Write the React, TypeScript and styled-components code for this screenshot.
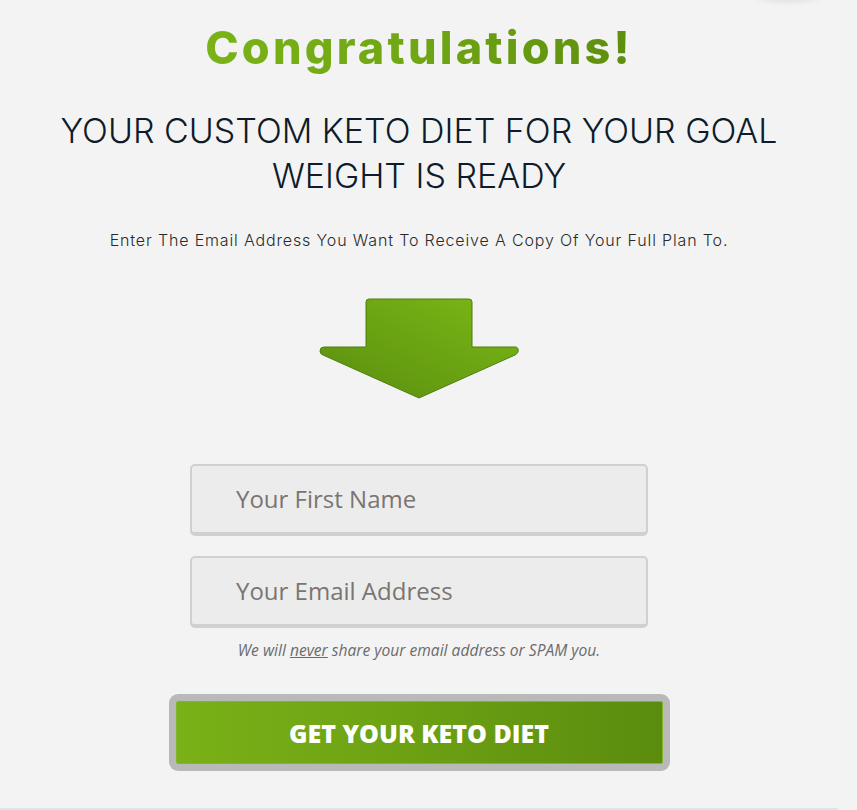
import React from "react";
import styled, { createGlobalStyle } from "styled-components";

const Global = createGlobalStyle`
  html, body { margin: 0; padding: 0; background: #f3f3f3; }
  body { font-family: "Open Sans", "Liberation Sans", sans-serif; overflow: hidden; }
`;

const Page = styled.div`
  position: relative;
  width: 838px;
  height: 808px;
  border-bottom: 2px solid #dfe4ea;
  display: flex;
  flex-direction: column;
  align-items: center;
  box-sizing: content-box;
`;

const TopShadow = styled.div`
  position: absolute;
  top: -16px;
  left: 754px;
  width: 68px;
  height: 16px;
  border-radius: 50%;
  box-shadow: 0 2px 6px rgba(0, 0, 0, 0.08);
  background: #f3f3f3;
`;

const Title = styled.h1`
  margin: 20px 0 0;
  font-family: "Inter", sans-serif;
  font-weight: 800;
  font-size: 45px;
  line-height: 56px;
  letter-spacing: 3.2px;
  background: linear-gradient(90deg, #7ab317 0%, #6fa614 50%, #5d8e0f 100%);
  -webkit-background-clip: text;
  background-clip: text;
  color: transparent;
`;

const Headline = styled.h2`
  margin: 32px 0 0;
  width: 760px;
  text-align: center;
  font-family: "Inter", sans-serif;
  font-weight: 300;
  font-size: 34px;
  line-height: 45px;
  letter-spacing: 0;
  color: #0d1b2a;
`;

const Lead = styled.p`
  margin: 32px 0 0;
  font-family: "Inter", sans-serif;
  font-weight: 300;
  font-size: 16px;
  line-height: 20px;
  letter-spacing: 0.85px;
  color: #2a2a2a;
`;

const ArrowWrap = styled.div`
  margin-top: 48px;
  width: 200px;
  height: 104px;
  display: flex;
  justify-content: center;
`;

const Form = styled.form`
  margin-top: 62px;
  display: flex;
  flex-direction: column;
  align-items: center;
  width: 458px;
`;

const Field = styled.input`
  box-sizing: border-box;
  width: 458px;
  height: 72px;
  margin-bottom: 20px;
  padding: 0 0 2px 44px;
  background: #ececec;
  border: 2px solid #d0d0d0;
  border-bottom-width: 4px;
  border-radius: 5px;
  font-family: "Open Sans", sans-serif;
  font-size: 24px;
  color: #555;
  outline: none;
  &::placeholder { color: #7a7572; }
`;

const Privacy = styled.p`
  margin: -8px 0 0;
  font-family: "Open Sans", sans-serif;
  font-style: italic;
  font-size: 15.6px;
  line-height: 20px;
  color: #6b6b6b;
  u { text-decoration: underline; }
`;

const ButtonFrame = styled.div`
  margin-top: 34px;
  width: 501px;
  height: 77px;
  box-sizing: border-box;
  padding: 7px;
  background: #b9b9b9;
  border-radius: 9px;
  display: flex;
`;

const Submit = styled.button`
  flex: 1;
  border: 1px solid #82b62a;
  border-radius: 2px;
  background: linear-gradient(90deg, #79b117 0%, #6fa414 40%, #5b8c0e 100%);
  color: #fff;
  font-family: "Open Sans", sans-serif;
  font-weight: 800;
  font-size: 25px;
  letter-spacing: 0;
  cursor: pointer;
`;

function DownArrow() {
  return (
    <svg width="200" height="104" viewBox="0 0 200 104">
      <defs>
        <linearGradient id="ag" x1="1" y1="0" x2="0" y2="1">
          <stop offset="0" stopColor="#7bb815" />
          <stop offset="1" stopColor="#5a8e10" />
        </linearGradient>
      </defs>
      <path
        d="M50 1 H150 Q153 1 153 4 V49 H196 Q200 49 199 54 Q198 56 196 57 L100 100 L4 57 Q1 56 1 53 Q1 49 5 49 H47 V4 Q47 1 50 1 Z"
        fill="url(#ag)"
        stroke="#4f7f0c"
        strokeWidth="1"
      />
    </svg>
  );
}

export default function App() {
  return (
    <>
      <Global />
      <Page>
        <TopShadow />
        <Title>Congratulations!</Title>
        <Headline>YOUR CUSTOM KETO DIET FOR YOUR GOAL WEIGHT IS READY</Headline>
        <Lead>Enter The Email Address You Want To Receive A Copy Of Your Full Plan To.</Lead>
        <ArrowWrap>
          <DownArrow />
        </ArrowWrap>
        <Form onSubmit={(e) => e.preventDefault()}>
          <Field type="text" placeholder="Your First Name" />
          <Field type="email" placeholder="Your Email Address" />
          <Privacy>
            We will <u>never</u> share your email address or SPAM you.
          </Privacy>
          <ButtonFrame>
            <Submit type="submit">GET YOUR KETO DIET</Submit>
          </ButtonFrame>
        </Form>
      </Page>
    </>
  );
}
